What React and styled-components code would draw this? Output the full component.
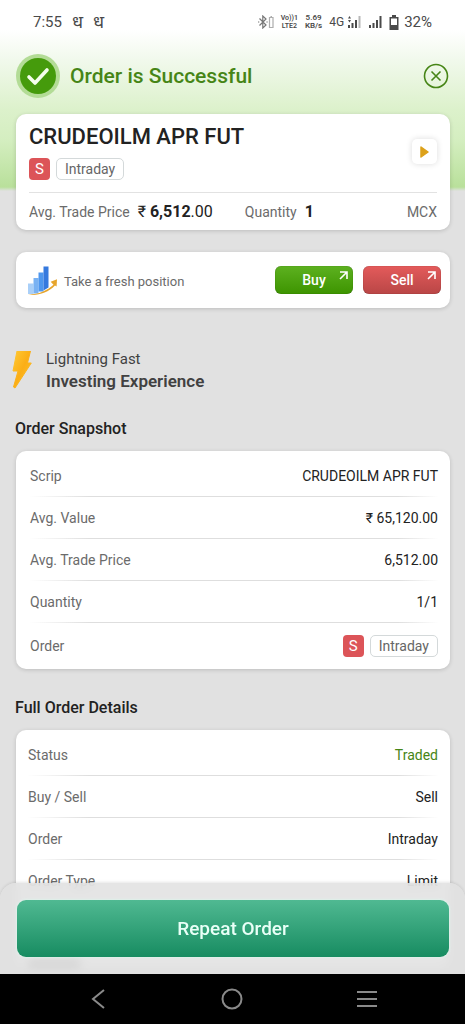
import React from "react";
import styled, { createGlobalStyle } from "styled-components";

const GlobalStyle = createGlobalStyle`
  *, *::before, *::after { box-sizing: border-box; }
  body { margin: 0; background: #e1e1e1; }
  body, button { font-family: Roboto, "Noto Sans", "Liberation Sans", sans-serif; }
  button { border: 0; padding: 0; background: none; cursor: pointer; }
  h1, h2, p, dl, dd, dt { margin: 0; }
  svg { display: block; flex: none; }
`;

const Screen = styled.div`
  height: 100vh;
  display: flex;
  flex-direction: column;
  background: #e1e1e1;
  color: #222;
  font-size: 14px;
  line-height: 20px;
`;

const Scroller = styled.main`
  flex: 1;
  min-height: 0;
  overflow-y: auto;
  scrollbar-width: none;
  background: linear-gradient(#ffffff 0, #ffffff 30px, #f1f9ec 60px, #dcf1cb 110px, #d4eec0 140px, #b9e09b 187px, #e1e1e1 191px) no-repeat;
`;

const StatusBar = styled.div`
  display: flex;
  align-items: center;
  justify-content: space-between;
  height: 44px;
  padding: 0 33px;
  color: #4a4a4a;
`;

const StatusGroup = styled.div`
  display: flex;
  align-items: center;
  gap: ${(p) => p.$gap}px;
`;

const Clock = styled.span`
  font-size: 15px;
`;

const AppMark = styled.span`
  font-size: 18px;
  line-height: 20px;
`;

const TinyStack = styled.span`
  display: flex;
  flex-direction: column;
  font-size: ${(p) => (p.$small ? 7 : 8)}px;
  line-height: 8px;
  font-weight: 600;
  text-align: center;
`;

const Battery = styled.span`
  font-size: 15px;
`;

const NetType = styled.span`
  font-size: 12px;
`;

const Header = styled.header`
  display: flex;
  align-items: center;
  gap: 10px;
  height: 64px;
  padding: 0 16px;
`;

const PageTitle = styled.h1`
  flex: 1;
  font-size: 21px;
  line-height: 24px;
  font-weight: 500;
  color: #468516;
`;

const Card = styled.section`
  margin: 0 15px 0 16px;
  border-radius: 10px;
  background: #fff;
  box-shadow: 0 1px 4px rgba(0, 0, 0, 0.16);
`;

const SummaryCard = styled(Card)`
  margin-top: 6px;
  padding: 9px 13px 0;
`;

const SummaryTop = styled.div`
  display: flex;
  align-items: center;
  justify-content: space-between;
  padding-bottom: 12px;
  border-bottom: 1px solid #e2e2e2;
`;

const ScripName = styled.h2`
  font-size: 22px;
  line-height: 28px;
  font-weight: 500;
  margin-bottom: 7px;
`;

const Tags = styled.div`
  display: flex;
  align-items: center;
  gap: 6px;
`;

const SideBadge = styled.span`
  width: 21px;
  height: 22px;
  border-radius: 4px;
  background: #dc5458;
  color: #fff;
  font-size: 15px;
  line-height: 22px;
  text-align: center;
`;

const Chip = styled.span`
  height: 22px;
  padding: 0 8px;
  border: 1px solid #d4d9da;
  border-radius: 5px;
  line-height: 20px;
  color: #666;
`;

const PlayButton = styled.button`
  display: grid;
  place-items: center;
  width: 25px;
  height: 25px;
  border-radius: 5px;
  background: #fff;
  box-shadow: 0 0 6px rgba(0, 0, 0, 0.14);
`;

const SummaryStats = styled.div`
  display: flex;
  align-items: center;
  height: 37px;
  color: #6b6b6b;
`;

const Stat = styled.p`
  display: flex;
  gap: 8px;
  margin-right: 32px;
`;

const StatValue = styled.span`
  font-size: 16px;
  color: #222;
`;

const Exchange = styled.span`
  margin-left: auto;
`;

const FreshCard = styled(Card)`
  display: flex;
  align-items: center;
  gap: 7px;
  height: 56px;
  margin-top: 22px;
  padding: 0 9px 0 12px;
`;

const FreshText = styled.p`
  flex: 1;
  padding-top: 3px;
  font-size: 13px;
  color: #6b6b6b;
`;

const TradeButton = styled.button`
  position: relative;
  width: 78px;
  height: 28px;
  margin-left: 3px;
  border-radius: 6px;
  color: #fff;
  font-size: 14px;
  font-weight: 500;
  background: ${(p) => (p.$sell ? "linear-gradient(#e45b5b, #b94646)" : "linear-gradient(#5db120, #3d9400)")};
  box-shadow: inset 0 0 1px rgba(0, 0, 0, 0.5);
`;

const CornerArrow = styled.svg`
  position: absolute;
  top: 5px;
  right: 5px;
`;

const Promo = styled.section`
  display: flex;
  align-items: center;
  gap: 14px;
  margin: 40px 12px 0;
  color: #414141;
`;

const PromoText = styled.p`
  display: flex;
  flex-direction: column;
  font-size: 15px;
  line-height: 22px;
`;

const PromoStrong = styled.strong`
  font-size: 17px;
  font-weight: 600;
`;

const SectionTitle = styled.h2`
  margin: ${(p) => p.$top}px 15px 11px;
  font-size: 16px;
  line-height: 22px;
  font-weight: 500;
`;

const DetailList = styled.dl`
  padding: 4px 12px 0 ${(p) => p.$inset}px;
`;

const DetailRow = styled.div`
  display: flex;
  align-items: center;
  justify-content: space-between;
  height: 42px;
  border-bottom: 1px solid;
  border-image: linear-gradient(90deg, transparent, #dedede 15%, #dedede 90%, transparent) 1;
`;

const SnapshotList = styled.div`
  ${DetailRow}:last-child { height: 46px; border: 0; }
`;

const Term = styled.dt`
  color: #6b6b6b;
`;

const Value = styled.dd`
  color: ${(p) => (p.$good ? "#468516" : "#222")};
`;

const LoadingBar = styled.div`
  width: 52px;
  height: 10px;
  margin: 56px 0 30px 12px;
  background: #999;
`;

const ActionSheet = styled.div`
  position: sticky;
  bottom: 0;
  padding: 17px 16px 17px 17px;
  border-radius: 16px 16px 0 0;
  background: rgba(225, 225, 225, 0.86);
  backdrop-filter: blur(5px);
  box-shadow: 0 -1px 3px rgba(0, 0, 0, 0.1);
`;

const RepeatButton = styled.button`
  display: block;
  width: 100%;
  height: 57px;
  border-radius: 9px;
  background: linear-gradient(#50b992, #178c61);
  box-shadow: 0 0 3px #d8fff0;
  color: #e9fff7;
  font-size: 19px;
  font-weight: 500;
`;

const NavBar = styled.nav`
  display: flex;
  align-items: center;
  justify-content: space-around;
  height: 50px;
  padding: 0 31px;
  background: #000;
`;

const NavButton = styled.button`
  display: grid;
  place-items: center;
  width: 48px;
  height: 48px;
`;

function Signal({ data }) {
  return (
    <svg width="14" height="12" viewBox="0 0 14 12" fill="#4a4a4a">
      {data ? <path d="M1 2.500l1.500-2.500L4 2.500zM1 4h3L2.500 6.500z" /> : null}
      <rect x="1" y="9" width="2" height="3" />
      <rect x="4.500" y="7" width="2" height="5" />
      <rect x="8" y="4" width="2" height="8" />
      <rect x="11.500" y="0" width="2" height="12" opacity={data ? 0.4 : 1} />
    </svg>
  );
}

function BluetoothIcon() {
  return (
    <svg width="16" height="14" viewBox="0 0 16 14" fill="none" stroke="#777" strokeWidth="1.200">
      <path d="M1.500 3.500l6.500 6.500-3.200 3V1L8 4 1.500 10.500" />
      <path d="M0 7h1.300M8.400 7h1.300" />
      <path d="M11.500 2.500h3.500v10h-3.500zM12.500 1.500h1.500" opacity="0.6" />
    </svg>
  );
}

function BatteryIcon() {
  return (
    <svg width="10" height="15" viewBox="0 0 10 15">
      <path d="M3 0h4v2h2.500v13h-9V2H3z" fill="#4a4a4a" />
      <path d="M2 3.500h6V10H2z" fill="#fff" />
    </svg>
  );
}

function SuccessIcon() {
  return (
    <svg width="44" height="44" viewBox="0 0 44 44">
      <circle cx="22" cy="22" r="22" fill="#b3dc96" />
      <circle cx="22" cy="22" r="18" fill="#459b0c" />
      <path d="M13 23l6 6L31 16" fill="none" stroke="#f4ffec" strokeWidth="3.600" strokeLinecap="round" strokeLinejoin="round" />
    </svg>
  );
}

function CloseIcon() {
  return (
    <svg width="26" height="26" viewBox="0 0 26 26" fill="none" stroke="#468516">
      <circle cx="13" cy="13" r="11.500" strokeWidth="1.600" />
      <path d="M8.500 8.500l9 9M17.500 8.500l-9 9" strokeWidth="1.600" />
    </svg>
  );
}

function GrowthIcon() {
  return (
    <svg width="29" height="29" viewBox="0 0 29 29">
      <path d="M0 17.500h5.500V28H0z" fill="#a9cff8" />
      <path d="M5.500 12h5v15.500h-5z" fill="#79b2f3" />
      <path d="M10.500 6.500h5v19h-5z" fill="#4e97ee" />
      <path d="M15.500 0.500h5v21l-5 3z" fill="#3579de" />
      <path d="M0 28.600c10 .3 19-4 25.500-9.800l-2.800-3 6.300-2.600-.4 7.200-1.600-1C20 26.500 10 30 0 28.600z" fill="#e7a52c" />
    </svg>
  );
}

function BoltIcon() {
  return (
    <svg width="20" height="38" viewBox="0 0 20 38">
      <defs>
        <linearGradient id="bolt" x1="0" x2="1" y1="0" y2="1">
          <stop offset="0" stopColor="#ffca35" />
          <stop offset="0.500" stopColor="#fbae16" />
          <stop offset="1" stopColor="#ffc72c" />
        </linearGradient>
      </defs>
      <path d="M5 0h13.500L15.500 12h3.800L3 37 1.500 36 6 20H1z" fill="url(#bolt)" stroke="url(#bolt)" strokeLinejoin="round" />
    </svg>
  );
}

function TradeAction({ sell, children }) {
  return (
    <TradeButton type="button" $sell={sell}>
      {children}
      <CornerArrow width="9" height="9" viewBox="0 0 9 9" fill="none" stroke="#fff" strokeWidth="1.600">
        <path d="M1 1h7v7M8 1L1 8" />
      </CornerArrow>
    </TradeButton>
  );
}

function OrderTags() {
  return (
    <Tags>
      <SideBadge>S</SideBadge>
      <Chip>Intraday</Chip>
    </Tags>
  );
}

function Details({ rows, inset }) {
  return (
    <DetailList $inset={inset}>
      {rows.map(([term, value, good]) => (
        <DetailRow key={term}>
          <Term>{term}</Term>
          <Value $good={good}>{value}</Value>
        </DetailRow>
      ))}
    </DetailList>
  );
}

const snapshot = [
  ["Scrip", "CRUDEOILM APR FUT"],
  ["Avg. Value", "₹ 65,120.00"],
  ["Avg. Trade Price", "6,512.00"],
  ["Quantity", "1/1"],
  ["Order", <OrderTags key="tags" />],
];

const fullDetails = [
  ["Status", "Traded", true],
  ["Buy / Sell", "Sell"],
  ["Order", "Intraday"],
  ["Order Type", "Limit"],
];

export default function App() {
  return (
    <Screen>
      <GlobalStyle />
      <Scroller>
        <StatusBar>
          <StatusGroup $gap={10}>
            <Clock>7:55</Clock>
            <AppMark>ध</AppMark>
            <AppMark>ध</AppMark>
          </StatusGroup>
          <StatusGroup $gap={7}>
            <BluetoothIcon />
            <TinyStack $small>
              <span>Vo))1</span>
              <span>LTE2</span>
            </TinyStack>
            <TinyStack>
              <span>5.69</span>
              <span>KB/s</span>
            </TinyStack>
            <StatusGroup $gap={3}>
              <NetType>4G</NetType>
              <Signal data />
            </StatusGroup>
            <Signal />
            <StatusGroup $gap={5}>
              <BatteryIcon />
              <Battery>32%</Battery>
            </StatusGroup>
          </StatusGroup>
        </StatusBar>

        <Header>
          <SuccessIcon />
          <PageTitle>Order is Successful</PageTitle>
          <button type="button" aria-label="Close">
            <CloseIcon />
          </button>
        </Header>

        <SummaryCard>
          <SummaryTop>
            <div>
              <ScripName>CRUDEOILM APR FUT</ScripName>
              <OrderTags />
            </div>
            <PlayButton type="button" aria-label="Open scrip">
              <svg width="9" height="12" viewBox="0 0 9 12">
                <path d="M1 1l7 5-7 5z" fill="#dca11a" stroke="#dca11a" strokeWidth="1.500" strokeLinejoin="round" />
              </svg>
            </PlayButton>
          </SummaryTop>
          <SummaryStats>
            <Stat>
              Avg. Trade Price
              <StatValue>
                ₹ <b>6,512</b>.00
              </StatValue>
            </Stat>
            <Stat>
              Quantity
              <StatValue>
                <b>1</b>
              </StatValue>
            </Stat>
            <Exchange>MCX</Exchange>
          </SummaryStats>
        </SummaryCard>

        <FreshCard>
          <GrowthIcon />
          <FreshText>Take a fresh position</FreshText>
          <TradeAction>Buy</TradeAction>
          <TradeAction sell>Sell</TradeAction>
        </FreshCard>

        <Promo>
          <BoltIcon />
          <PromoText>
            Lightning Fast
            <PromoStrong>Investing Experience</PromoStrong>
          </PromoText>
        </Promo>

        <SectionTitle $top={26}>Order Snapshot</SectionTitle>
        <Card>
          <SnapshotList>
            <Details rows={snapshot} inset={14} />
          </SnapshotList>
        </Card>

        <SectionTitle $top={28}>Full Order Details</SectionTitle>
        <Card>
          <Details rows={fullDetails} inset={12} />
          <LoadingBar />
        </Card>

        <ActionSheet>
          <RepeatButton type="button">Repeat Order</RepeatButton>
        </ActionSheet>
      </Scroller>

      <NavBar>
        <NavButton type="button" aria-label="Back">
          <svg width="14" height="20" viewBox="0 0 14 20" fill="none" stroke="#8a8a8a" strokeWidth="2">
            <path d="M13 1L2 10l11 9" />
          </svg>
        </NavButton>
        <NavButton type="button" aria-label="Home">
          <svg width="22" height="22" viewBox="0 0 22 22" fill="none" stroke="#8a8a8a" strokeWidth="2">
            <circle cx="11" cy="11" r="9.500" />
          </svg>
        </NavButton>
        <NavButton type="button" aria-label="Recent apps">
          <svg width="22" height="18" viewBox="0 0 22 18" stroke="#8a8a8a" strokeWidth="2">
            <path d="M1 2h20M1 9h20M1 16h20" />
          </svg>
        </NavButton>
      </NavBar>
    </Screen>
  );
}
